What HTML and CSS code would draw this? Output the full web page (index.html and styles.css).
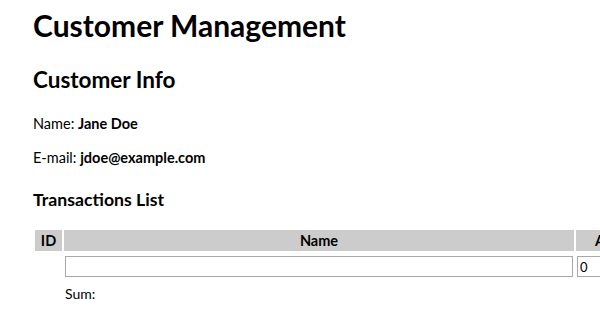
FILE: index.html
```html
<!DOCTYPE html>
<html lang="en">
<head>
  <meta charset="UTF-8" />
  <title>Customer Management</title>
  <link rel="stylesheet" href="styles.css">
</head>
<body>

<div class="page">
  <h1>Customer Management</h1>

  <h2>Customer Info</h2>
  <p class="first">Name: <b>Jane Doe</b></p>
  <p>E-mail: <b>jdoe@example.com</b></p>

  <h3>Transactions List</h3>
  <table class="transactions">
    <thead>
      <tr>
        <th class="col-id">ID</th>
        <th class="col-name">Name</th>
        <th class="col-amount">Amount</th>
      </tr>
    </thead>
    <tbody>
      <tr>
        <td></td>
        <td><input type="text" class="field" /></td>
        <td><input type="text" class="field" value="0" /></td>
      </tr>
    </tbody>
    <tfoot>
      <tr>
        <td></td>
        <td class="sum">Sum:</td>
        <td></td>
      </tr>
    </tfoot>
  </table>
</div>

</body>
</html>
```

FILE: styles.css
```css
* {
  box-sizing: border-box;
}
html, body {
  overflow: hidden;
}
body {
  margin: 0;
  font-family: Lato, "Open Sans", sans-serif;
  color: #000;
}
.page {
  padding: 0 0 0 33px;
  width: 800px;
}
h1 {
  font-size: 30px;
  margin: 6px 0 0;
  line-height: 38px;
}
h2 {
  font-size: 22.5px;
  margin: 22px 0 0;
  line-height: 28px;
}
p {
  font-size: 14.5px;
  margin: 14px 0 0;
  line-height: 20px;
}
p.first {
  margin-top: 20px;
}
h3 {
  font-size: 17.7px;
  margin: 20px 0 0;
  line-height: 24px;
}
.transactions {
  margin-top: 16px;
  border-spacing: 2px;
}
.transactions th {
  background-color: #cccccc;
  font-size: 14.5px;
  padding: 0 2px;
  height: 21px;
  line-height: 19px;
}
.col-id {
  width: 27px;
}
.col-name {
  width: 510px;
}
.col-amount {
  width: 90px;
}
.transactions td {
  padding: 1px;
}
.field {
  display: block;
  width: 100%;
  height: 21px;
  margin-top: 2px;
  border: 1px solid #a9a9a9;
  padding: 1px 2px;
  font-family: Lato, "Open Sans", sans-serif;
  font-size: 13px;
}
.transactions td.sum {
  font-size: 14px;
  padding-top: 5px;
}
```
